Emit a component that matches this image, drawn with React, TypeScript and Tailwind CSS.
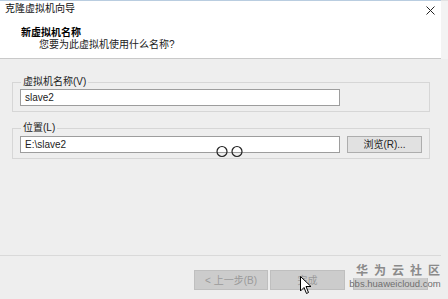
import React from "react";

const font = { fontFamily: '"Liberation Sans", "Noto Sans CJK SC", sans-serif' };

export default function App() {
  return (
    <div
      className="relative w-[448px] h-[299px] overflow-hidden bg-[#eeeeee] flex text-black"
      style={font}
    >
      <div className="w-[441px] flex flex-col">
        {/* header */}
        <div className="h-[59px] bg-white border-t border-[#b9cde0] border-b border-b-[#c9c9c9] flex flex-col">
          <div className="h-[15px] flex items-center justify-between pl-[5px] pr-[6px]">
            <span className="text-[10px] leading-[12px] text-[#111]">克隆虚拟机向导</span>
            <svg width="9" height="9" viewBox="0 0 9 9" className="mt-[4px]">
              <path d="M0.5 0.5 L8.5 8.5 M8.5 0.5 L0.5 8.5" stroke="#222" strokeWidth="1" />
            </svg>
          </div>
          <div className="pl-[21px] pt-[11px] text-[10px] leading-[12px] font-bold">新虚拟机名称</div>
          <div className="pl-[39px] pt-[0px] text-[10px] leading-[12px] text-[#222]">
            您要为此虚拟机使用什么名称?
          </div>
        </div>

        {/* body */}
        <div className="flex-1 flex flex-col pl-[12px] pr-[11px] pt-[17px]">
          <fieldset className="border border-[#d6d6d6] px-[7px] pt-[1px] pb-[5px]">
            <legend className="ml-[1px] px-[2px] text-[10px] leading-[12px] text-[#222]">
              虚拟机名称(V)
            </legend>
            <div className="w-[320px] h-[17px] bg-white border border-[#9d9d9d] flex items-center pl-[4px] text-[10px] text-[#222]">
              slave2
            </div>
          </fieldset>

          <fieldset className="mt-[10px] border border-[#d6d6d6] px-[7px] pt-[2px] pb-[5px]">
            <legend className="ml-[1px] px-[2px] text-[10px] leading-[12px] text-[#222]">位置(L)</legend>
            <div className="flex items-center">
              <div className="w-[320px] h-[17px] bg-white border border-[#9d9d9d] flex items-center pl-[4px] text-[10px] text-[#222]">
                E:\slave2
              </div>
              <div className="ml-[7px] w-[75px] h-[17px] bg-[#e1e1e1] border border-[#adadad] flex items-center justify-center text-[10px] text-[#222]">
                浏览(R)...
              </div>
            </div>
          </fieldset>
        </div>

        {/* footer */}
        <div className="h-[44px] border-t border-[#d9d9d9] flex items-start justify-end pt-[14px] pr-[13px]">
          <div className="w-[74px] h-[20px] bg-[#cccccc] border border-[#bfbfbf] flex items-center justify-center text-[10px] text-[#9a9a9a]">
            &lt; 上一步(B)
          </div>
          <div className="ml-[2px] w-[75px] h-[20px] bg-[#cccccc] border border-[#bfbfbf] flex items-center justify-center text-[10px] text-[#9a9a9a]">
            完成
          </div>
          <div className="ml-[8px] w-[75px] h-[20px] bg-[#cccccc] border border-[#bfbfbf]" />
        </div>
      </div>
      <div className="w-[7px] flex flex-col">
        <div className="h-[59px] bg-[#f3f3f3] border-t border-[#e3e3e3]" />
        <div className="flex-1 bg-[#eeeeee]" />
      </div>

      {/* loading circles */}
      <svg className="absolute left-[215px] top-[145px]" width="30" height="13" viewBox="0 0 30 13">
        <circle cx="7" cy="6.5" r="5" fill="none" stroke="#222" strokeWidth="1.2" />
        <circle cx="22" cy="6.5" r="5" fill="none" stroke="#222" strokeWidth="1.2" />
      </svg>

      {/* watermark */}
      <div className="absolute left-[350px] top-[262px] w-[90px] flex flex-col items-center whitespace-nowrap">
        <div
          className="w-full text-center bg-[#eeeeee] text-[12px] leading-[16px] font-bold text-[#8a8a8a] tracking-[6px] pl-[6px]"
          style={{ fontFamily: '"Noto Sans CJK SC", sans-serif' }}
        >
          华为云社区
        </div>
        <div className="text-[9.5px] leading-[12px] text-[#6f6f6f]">bbs.huaweicloud.com</div>
      </div>

      {/* cursor */}
      <svg className="absolute left-[300px] top-[276px]" width="12" height="19" viewBox="0 0 12 19">
        <path d="M0.5 0.5 L0.5 15 L4 11.5 L6.5 17.5 L8.5 16.5 L6 10.5 L11 10.5 Z" fill="#fff" stroke="#000" strokeWidth="1" strokeLinejoin="round" />
      </svg>
    </div>
  );
}
